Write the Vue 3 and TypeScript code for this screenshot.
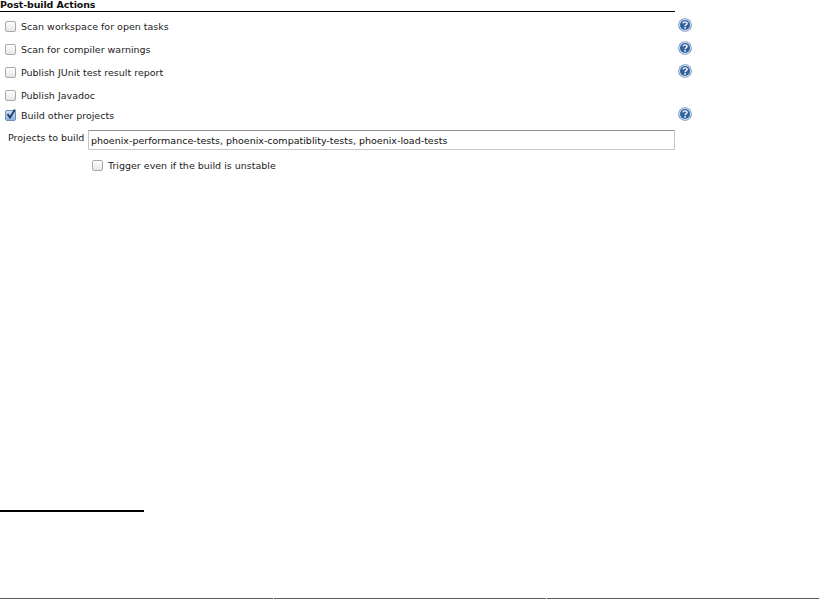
<script setup lang="ts">
interface Row { label: string; checked: boolean; help: boolean; size: string }
const rows: Row[] = [
  { label: 'Scan workspace for open tasks', checked: false, help: true, size: 'tall' },
  { label: 'Scan for compiler warnings', checked: false, help: true, size: 'tall' },
  { label: 'Publish JUnit test result report', checked: false, help: true, size: 'tall' },
  { label: 'Publish Javadoc', checked: false, help: false, size: 'mid' },
  { label: 'Build other projects', checked: true, help: true, size: 'short' },
]
</script>

<template>
  <div class="page">
    <div class="section">
      <h2 class="title">Post-build Actions</h2>
      <div class="rows">
        <div
          v-for="row in rows"
          :key="row.label"
          class="row"
          :class="row.size"
        >
          <span class="box" :class="{ on: row.checked }">
            <svg v-if="row.checked" class="tick" viewBox="0 0 10 10" width="10" height="10">
              <path d="M1.5 5 L4 8.5 L9 0.5" fill="none" stroke="#1f3f73" stroke-width="1.9" />
            </svg>
          </span>
          <span class="label">{{ row.label }}</span>
          <svg v-if="row.help" class="help" viewBox="0 0 14 14" width="14" height="14">
            <circle cx="7" cy="7" r="6.8" fill="#6b90bd" />
            <circle cx="7" cy="7" r="5.9" fill="#dce7f3" />
            <circle cx="7" cy="7" r="5" fill="#2f5f9c" />
            <path d="M5 5.4 C5.1 3.3 9.1 3.3 9.1 5.4 C9.1 6.8 7.1 6.8 7.1 8.3" fill="none" stroke="#fff" stroke-width="1.4" />
            <rect x="6.3" y="9.1" width="1.6" height="1.6" fill="#fff" />
          </svg>
        </div>
      </div>
      <div class="field">
        <label class="field-label">Projects to build</label>
        <input
          class="input"
          type="text"
          value="phoenix-performance-tests, phoenix-compatiblity-tests, phoenix-load-tests"
        />
      </div>
      <div class="sub">
        <span class="box"></span>
        <span class="label">Trigger even if the build is unstable</span>
      </div>
    </div>
    <div class="rule"></div>
    <div class="foot">
      <span></span><span></span><span></span>
    </div>
  </div>
</template>

<style>
html, body { margin: 0; background: #fff; }
</style>

<style scoped>
.page {
  width: 820px;
  height: 599px;
  display: flex;
  flex-direction: column;
  font-family: "DejaVu Sans", Verdana, sans-serif;
  font-size: 9.5px;
  color: #222;
  overflow: hidden;
}
.section { width: 675px; }
.title {
  margin: 0;
  height: 11px;
  line-height: 10px;
  font-size: 9.5px;
  font-weight: bold;
  letter-spacing: -0.12px;
  color: #111;
  border-bottom: 1px solid #000;
}
.rows { margin-top: 3px; }
.row {
  box-sizing: border-box;
  display: flex;
  align-items: center;
  height: 20px;
  padding-left: 5px;
  position: relative;
}
.row.tall { height: 23px; }
.row.mid { height: 21px; padding-top: 1px; }
.box {
  box-sizing: border-box;
  flex: none;
  width: 11px;
  height: 11px;
  border: 1px solid #a9a9a9;
  border-radius: 2px;
  background: linear-gradient(#fff, #e6e6e6);
  position: relative;
}
.box.on { background: linear-gradient(#cfdff2, #8fb2dc); border-color: #6f8fb8; }
.tick { position: absolute; left: 0; top: -2px; }
.label { margin-left: 5px; white-space: nowrap; }
.help { position: absolute; left: 678px; top: 50%; margin-top: -9px; }
.row.short .help { margin-top: -8px; }
.field {
  display: flex;
  align-items: flex-start;
  margin-top: 5px;
}
.field-label {
  width: 88px;
  flex: none;
  box-sizing: border-box;
  padding: 2px 3px 0 8px;
  white-space: nowrap;
}
.input {
  flex: 1;
  min-width: 0;
  box-sizing: border-box;
  height: 20px;
  padding: 0 2px;
  border: 1px solid #c8c8c8;
  border-top-color: #8f8f8f;
  outline: none;
  font: inherit;
  color: #111;
}
.sub {
  display: flex;
  align-items: center;
  height: 20px;
  padding-left: 92px;
  margin-top: 5px;
}
.rule {
  width: 144px;
  height: 2px;
  background: #000;
  margin-top: 335px;
}
.foot {
  margin-top: auto;
  display: grid;
  grid-template-columns: 274px 273px 273px;
  height: 1px;
}
.foot span { background: #5a5a5a; border-right: 1px solid #ddd; }
</style>
